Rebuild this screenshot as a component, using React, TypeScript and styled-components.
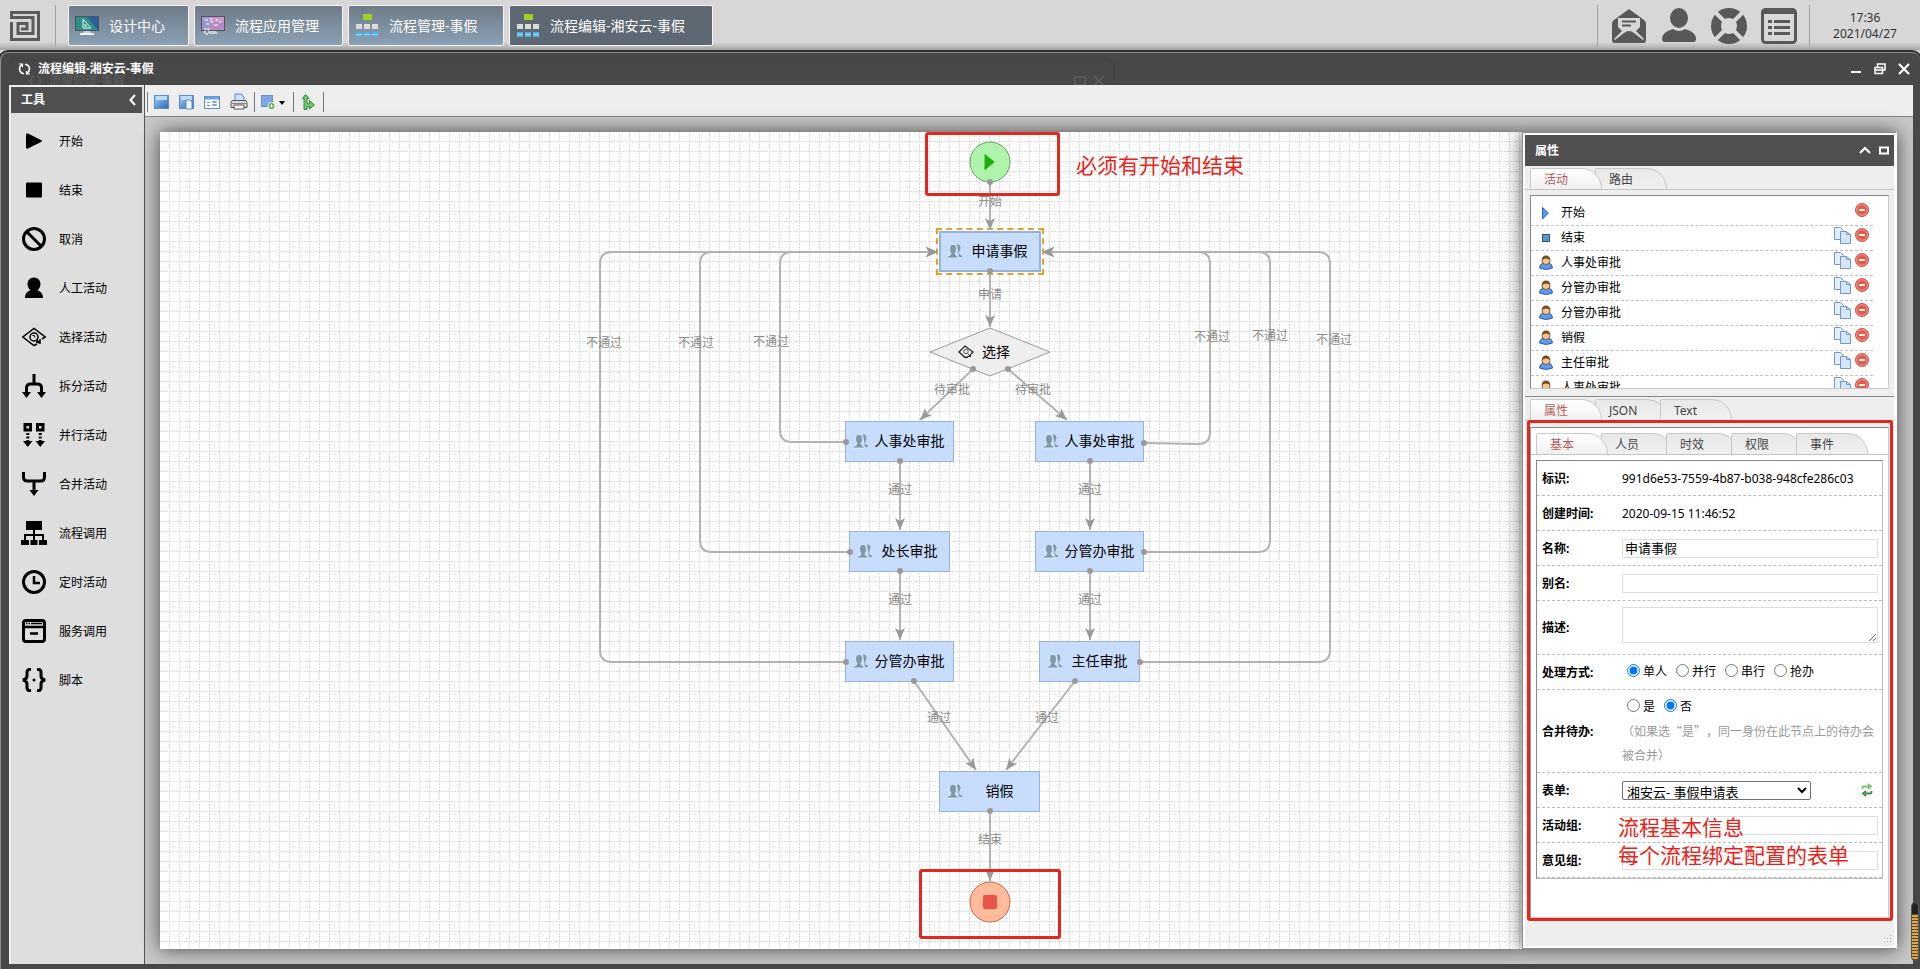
import React from 'react';
import styled, { createGlobalStyle, css } from 'styled-components';

const GlobalStyle = createGlobalStyle`
  *, *::before, *::after { box-sizing: border-box; }
  body {
    margin: 0;
    font: 12px/16px "Noto Sans", "Noto Sans CJK SC", sans-serif;
    color: #000;
    background: #d7d7d7;
  }
  button, input, select, textarea { font: inherit; color: inherit; }
  button { padding: 0; border: 0; background: none; cursor: pointer; }
  ul { margin: 0; padding: 0; list-style: none; }
  svg { display: block; }
`;

/* ---------- desktop ---------- */

const Desktop = styled.div`
  min-height: 100vh;
  display: flex;
  flex-direction: column;
  overflow: hidden;
`;

const Taskbar = styled.header`
  flex: none;
  height: 50px;
  display: flex;
  align-items: stretch;
  padding: 5px 0 4px 10px;
  background: linear-gradient(#d7d7d7 0 42px, #a4a4a4 50px);
`;

const LogoButton = styled.button`
  width: 30px;
`;

const BarDivider = styled.span<{ $before: number; $after: number }>`
  width: 1px;
  margin: 0 ${p => p.$after}px 0 ${p => p.$before}px;
  background: #a2a2a2;
`;

const Tasks = styled.nav`
  flex: 1;
  display: flex;
  gap: 5px;
`;

const TaskButton = styled.button<{ $active?: boolean; $min: number }>`
  display: flex;
  align-items: center;
  gap: 10px;
  min-width: ${p => p.$min}px;
  padding: 0 23px 0 6px;
  border: 1px solid #f4f4f4;
  border-radius: 2px;
  color: #fff;
  font-size: 14px;
  line-height: 20px;
  white-space: nowrap;
  background: ${p => (p.$active ? '#5d6872' : 'linear-gradient(#6f7b88, #8ba1b4)')};
`;

const Tray = styled.div`
  display: flex;
  align-items: center;
  gap: 14px;
  color: #585858;
`;

const Clock = styled.time`
  width: 110px;
  align-self: center;
  color: #333;
  text-align: center;
`;

/* ---------- window ---------- */

const Window = styled.main`
  position: relative;
  flex: 1;
  display: flex;
  flex-direction: column;
  padding: 0 7px 5px 8px;
  border: solid #8c8d8e;
  border-width: 1px 0 0 1px;
  border-radius: 8px 8px 0 0;
  background: #484848;
  box-shadow: 0 0 0 2px #2f3134;
  margin-top: 2px;
`;

const TitleBar = styled.div`
  position: relative;
  height: 32px;
  display: flex;
  align-items: center;
  gap: 7px;
  padding: 0 3px 0 9px;
  overflow: hidden;
  color: #fff;
  font-weight: 700;
`;

const Title = styled.h1`
  position: relative;
  margin: 0;
  flex: 1;
  font-size: 12px;
  line-height: 16px;
`;

const BackWindow = styled.div`
  position: absolute;
  top: 8px;
  left: 0;
  width: 58%;
  height: 40px;
  display: flex;
  align-items: center;
  gap: 7px;
  padding: 0 8px 0 20px;
  border-radius: 6px;
  color: #585959;
  box-shadow: 0 0 4px #3a3a3a;
`;

const BackTitle = styled.span`
  flex: 1;
`;

const WindowActions = styled.div`
  display: flex;
  gap: 12px;
`;

const WindowBody = styled.div`
  flex: 1;
  display: flex;
  min-width: 0;
`;

const SideBar = styled.aside`
  flex: none;
  width: 136px;
  padding: 2px;
  border-right: 1px solid #555;
  background: #dedede;
  box-shadow: inset 0 2px #eee, inset 2px 0 #eee;
`;

const SideHeader = styled.div`
  height: 26px;
  display: flex;
  align-items: center;
  justify-content: space-between;
  padding: 0 6px 0 10px;
  background: #505050;
  color: #fff;
  font-weight: 700;
`;

const ToolList = styled.ul`
  padding-top: 3px;
`;

const ToolButton = styled.button`
  width: 100%;
  height: 49px;
  display: flex;
  align-items: center;
  gap: 13px;
  padding-left: 11px;
`;

const ToolName = styled.span`
  padding-top: 2px;
`;

const Workspace = styled.div`
  flex: 1;
  min-width: 0;
  display: flex;
  flex-direction: column;
`;

const Toolbar = styled.div`
  flex: none;
  height: 32px;
  display: flex;
  align-items: center;
  padding: 2px 2px 0;
  border-bottom: 1px solid #858585;
  background: #eee;
`;

const ToolGroup = styled.div`
  display: flex;
  align-items: center;
  gap: 10px;
  height: 20px;
  padding: 0 6px;
  border-left: 1px solid #777;
  &:last-child { padding: 0 8px; border-right: 1px solid #777; }
`;

const Stage = styled.div`
  flex: 1;
  display: flex;
  padding: 15px 16px 15px 15px;
  background: #c8c8c8;
`;

/* ---------- diagram ---------- */

const PaperFrame = styled.div`
  flex: 1;
  display: flex;
  min-width: 0;
  box-shadow: 0 0 18px rgba(0, 0, 0, 0.65);
`;

const Paper = styled.section`
  position: relative;
  flex: 1;
  min-height: 812px;
  min-width: 0;
  overflow: hidden;
  background: #fff;
`;

const Layer = styled.svg`
  position: absolute;
  inset: 0;
  width: 100%;
  height: 100%;
`;

const NodeBox = styled.div<{ $x: number; $y: number; $w: number; $selected?: boolean }>`
  position: absolute;
  left: ${p => p.$x}px;
  top: ${p => p.$y}px;
  width: ${p => p.$w}px;
  height: 41px;
  display: flex;
  align-items: center;
  padding: 0 3px 1px 7px;
  border: ${p => (p.$selected ? 2 : 1)}px solid #94b2dc;
  background: #c8ddfb;
  font-size: 14px;
  line-height: 20px;
  ${p => p.$selected && css`
    padding-left: 6px;
    outline: 2px dashed #e2a220;
    outline-offset: 1px;
  `}
`;

const NodeName = styled.span`
  flex: 1;
  text-align: center;
  white-space: nowrap;
`;

const ChoiceName = styled.span<{ $x: number; $y: number }>`
  position: absolute;
  left: ${p => p.$x}px;
  top: ${p => p.$y}px;
  display: flex;
  align-items: center;
  gap: 8px;
  font-size: 14px;
  line-height: 20px;
`;

const EdgeLabel = styled.span<{ $x: number; $y: number }>`
  position: absolute;
  left: ${p => p.$x - 30}px;
  top: ${p => p.$y - 8}px;
  width: 60px;
  text-align: center;
  color: #8a8a8a;
`;

const RedFrame = styled.div<{ $x: number; $y: number; $w: number; $h: number }>`
  position: absolute;
  left: ${p => p.$x}px;
  top: ${p => p.$y}px;
  width: ${p => p.$w}px;
  height: ${p => p.$h}px;
  border: 3px solid #e3261e;
  border-radius: 3px;
  z-index: 2;
  pointer-events: none;
`;

const RedNote = styled.p<{ $x: number; $y: number }>`
  position: absolute;
  left: ${p => p.$x}px;
  top: ${p => p.$y}px;
  margin: 0;
  color: #e8231a;
  font-size: 21px;
  line-height: 28px;
  white-space: nowrap;
  pointer-events: none;
`;

/* ---------- property panel ---------- */

const Panel = styled.aside`
  position: relative;
  flex: none;
  width: 375px;
  display: flex;
  flex-direction: column;
  padding: 2px;
  border: 1px solid #8c8c8c;
  border-right-color: #fff;
  background: #eee;
  box-shadow: inset 0 0 0 2px #fff, 0 0 18px rgba(0, 0, 0, 0.65);
`;

const PanelHeader = styled.div`
  height: 31px;
  display: flex;
  align-items: center;
  gap: 8px;
  padding: 0 5px 0 10px;
  background: #505050;
  color: #fff;
`;

const PanelTitle = styled.h2`
  flex: 1;
  margin: 0;
  font-size: 12px;
  line-height: 16px;
`;

const TabStrip = styled.div<{ $inner?: boolean }>`
  flex: none;
  height: ${p => (p.$inner ? 27 : 24)}px;
  display: flex;
  align-items: flex-end;
  padding-left: 5px;
  border-bottom: 1px solid #c4c4c4;
`;

const Tab = styled.button<{ $active?: boolean }>`
  position: relative;
  z-index: ${p => (p.$active ? 1 : 0)};
  width: 72px;
  height: 21px;
  margin-right: -7px;
  padding: 2px 0 0 13px;
  border: solid #c8c8c8;
  border-width: 1px 1px 0 1px;
  border-radius: 2px 20px 0 0 / 2px 21px 0 0;
  background: ${p => (p.$active ? 'linear-gradient(#fff, #f0f0f0)' : 'linear-gradient(#e8e8e8, #f0f0f0)')};
  color: ${p => (p.$active ? '#b95a5a' : '#444')};
  text-align: left;
`;

const ActivityList = styled.ul`
  flex: none;
  height: 194px;
  margin: 5px 5px 0;
  padding: 5px 15px 0 0;
  border: 1px solid #c8c8c8;
  border-top-color: #888;
  border-left-color: #888;
  background: #fff;
  overflow: hidden;
`;

const ActivityRow = styled.li`
  height: 25px;
  display: flex;
  align-items: center;
  padding: 0 4px 0 7px;
  border-bottom: 1px dashed #c0c0c0;
`;

const ActivityName = styled.span`
  flex: 1;
  padding-left: 7px;
`;

const RowActions = styled.span`
  display: flex;
  align-items: center;
  gap: 4px;
  padding-bottom: 6px;
`;

const Lower = styled.div`
  position: relative;
  flex: 1;
  display: flex;
  flex-direction: column;
  margin-top: 7px;
  border-top: 1px solid #888;
`;

const LowerPane = styled.div`
  flex: 1;
  margin: 6px 5px 28px;
  border: 1px solid #c8c8c8;
  border-top-color: #888;
  border-left-color: #999;
  background: #fff;
`;

const Form = styled.form`
  margin: 5px;
  border: 1px solid #bbb;
  border-top-color: #888;
  border-left-color: #888;
`;

const Field = styled.div<{ $h?: number }>`
  height: ${p => p.$h ?? 35}px;
  display: flex;
  align-items: center;
  padding: 0 4px 0 5px;
  border-bottom: 1px dashed #bbb;
`;

const FieldName = styled.label`
  width: 80px;
  padding-top: 1px;
  font-weight: 700;
`;

const FieldValue = styled.span`
  padding-top: 1px;
`;

const FieldBody = styled.div`
  flex: 1;
  display: flex;
  align-items: center;
`;

const TextInput = styled.input`
  flex: 1;
  min-width: 0;
  height: 19px;
  padding: 0 2px 1px;
  border: 1px solid #ddd;
  background: #fff;
  font-size: 13px;
  line-height: 16px;
`;

const TextBox = styled.textarea`
  display: block;
  width: 100%;
  height: 36px;
  border: 1px solid #ddd;
  margin-bottom: 6px;
`;

const RadioLine = styled.div`
  display: flex;
  gap: 9px;
  padding-left: 5px;
`;

const RadioOption = styled.label`
  display: flex;
  align-items: center;
  gap: 3px;
  height: 24px;
`;

const Radio = styled.input`
  width: 13px;
  height: 13px;
  margin: 0 0 4px;
`;

const MergeBody = styled.div`
  flex: 1;
`;

const Hint = styled.p`
  margin: 0;
  color: #999;
  font-family: "Noto Sans CJK SC", sans-serif;
  line-height: 24px;
  text-spacing-trim: space-all;
`;

const FormSelect = styled.select`
  width: 189px;
  height: 19px;
  padding: 0;
  border: 1px solid #707070;
  border-radius: 2px;
  background: #fff;
  font-size: 13px;
  line-height: 16px;
`;

const RefreshButton = styled.button`
  margin: 0 5px 0 auto;
`;

const Grip = styled.svg`
  position: absolute;
  right: 4px;
  bottom: 5px;
`;

const ScrollMark = styled.div`
  position: absolute;
  right: 1px;
  bottom: 8px;
  width: 8px;
  height: 59px;
  border: 1px solid #555;
  border-radius: 4px;
  background: linear-gradient(#222 0 11px, transparent 11px),
    repeating-linear-gradient(#d8a84a 0 2px, #5a4520 2px 3px);
`;

/* ---------- icons ---------- */

const Logo = () => (
  <svg width="30" height="30" viewBox="0 0 30 30" fill="none" stroke="#5a5a5a" strokeWidth="3">
    <path d="M0 1.500H28.500V28.500H1.500V11" />
    <path d="M1.500 0v6.500H23V22.500H8V12.500H17V18H11" />
  </svg>
);

const Monitor = ({ pink }: { pink?: boolean }) => (
  <svg width="24" height="24" viewBox="0 0 24 24">
    <rect x="0.500" y="2.500" width="23" height="14" fill={pink ? '#b58bc4' : '#2d8f86'} stroke="#4b5560" />
    {pink ? (
      <>
        <path d="M1 3h22v5H1z" fill="#c898c8" />
        <path d="M1 3h8v13H1z" fill="#8e9ad0" opacity="0.600" />
        <path d="M4 6h3M9 5h2M9 8h3M15 6h2M18 8h2M5 10h3M13 11h4" stroke="#fff" strokeWidth="1" />
        <path d="M10 17h5l2 3H9z" fill="#c8d0d6" />
        <circle cx="6" cy="17.500" r="2.500" fill="none" stroke="#e6e6e6" strokeWidth="2" strokeDasharray="2 1" />
      </>
    ) : (
      <>
        <path d="M12 3h11v13z" fill="#2a5d9a" />
        <path d="M8 5v9h8zM10 10v2h2z" fill="none" stroke="#e8fff0" />
        <path d="M9 17h6l1 2H8z" fill="#c8d0d6" />
        <path d="M5 20h14" stroke="#f0f4f7" strokeWidth="2" />
      </>
    )}
  </svg>
);

const OrgColor = () => (
  <svg width="24" height="24" viewBox="0 0 24 24">
    <rect x="8" y="0" width="9" height="6" fill="#9fd320" />
    <path d="M1 10h6v5H1zM9 10h6v5H9zM17 10h6v5h-6z" fill="#dcdcdc" />
    <path d="M1 18h6v5H1zM9 18h6v5H9zM17 18h6v5h-6z" fill="#4fb0ea" />
    <path d="M1 20.500h6M9 20.500h6M17 20.500h6" stroke="#a7dcf8" />
  </svg>
);

const Mail = () => (
  <svg width="36" height="36" viewBox="0 0 36 36" fill="currentColor">
    <path d="M18 1L33 12q2 1 2 4v16q0 3-3 3H4q-3 0-3-3V16q0-3 2-4z" />
    <path d="M7 10h22v9l-4 4 8 8-1 1-9-7q-5-4-10 0l-9 7-1-1 8-8-4-4z" fill="#d7d7d7" />
    <path d="M11 13.500h14M11 17.500h9" stroke="currentColor" strokeWidth="2" />
  </svg>
);

const BigUser = () => (
  <svg width="36" height="36" viewBox="0 0 36 36" fill="currentColor">
    <ellipse cx="18" cy="10" rx="9" ry="10" />
    <path d="M1 31q0-7 11-10 6 4 12 0 11 3 11 10 0 3-3 3H4q-3 0-3-3z" />
  </svg>
);

const LifeBuoy = () => (
  <svg width="36" height="36" viewBox="0 0 36 36" fill="none">
    <circle cx="18" cy="18" r="12" stroke="currentColor" strokeWidth="12" />
    <path d="M4 4l28 28M32 4L4 32" stroke="#d7d7d7" strokeWidth="4" />
    <circle cx="18" cy="18" r="8" fill="#d7d7d7" />
  </svg>
);

const ListBox = () => (
  <svg width="36" height="36" viewBox="0 0 36 36" fill="none" stroke="currentColor">
    <rect x="1.500" y="1.500" width="33" height="33" rx="3" strokeWidth="3" />
    <path d="M2 3.500h32" strokeWidth="5" />
    <path d="M7 13.500h4M13 13.500h16M7 19.500h4M13 19.500h16M7 25.500h4M13 25.500h16" strokeWidth="3" />
  </svg>
);

const Cycle = () => (
  <svg width="13" height="12" viewBox="0 0 13 12" fill="none" stroke="currentColor" strokeWidth="1.500">
    <path d="M4.500 1.500Q1.500 3 1.500 6t3 4.500H6M8.500 10.500q3-1.500 3-4.500t-3-4.500H7" />
    <path d="M1 1h3.500v3M12 11H8.500V8" strokeWidth="1.200" />
  </svg>
);

const Minimize = () => (
  <svg width="12" height="12" viewBox="0 0 12 12"><path d="M1 9h10" stroke="#fff" strokeWidth="2" /></svg>
);
const Restore = () => (
  <svg width="12" height="12" viewBox="0 0 12 12" fill="none" stroke="#fff" strokeWidth="1.500">
    <path d="M3.500 4V1h7.500v6H9M1 4.500h7.500v6H1zM1 7h7" />
  </svg>
);
const Maximize = () => (
  <svg width="12" height="12" viewBox="0 0 12 12"><path d="M1 2h10v8H1z" fill="none" stroke="currentColor" strokeWidth="2" /></svg>
);
const Close = () => (
  <svg width="12" height="12" viewBox="0 0 12 12"><path d="M1 1l10 10M11 1L1 11" stroke="currentColor" strokeWidth="2.200" /></svg>
);

const tools: { name: string; icon: React.ReactNode }[] = [
  { name: '开始', icon: <path d="M4 5.500Q4 4 6 4.500l13 6.500q2 1 0 2L6 19.500q-2 .5-2-1z" fill="#000" stroke="none" /> },
  { name: '结束', icon: <rect x="4" y="4.500" width="16" height="15" rx="1" fill="#000" stroke="none" /> },
  { name: '取消', icon: <><circle cx="12" cy="12" r="10.500" /><path d="M5 5l14 14" /></> },
  {
    name: '人工活动',
    icon: <path d="M12 1.500c-4 0-6.500 3-6.500 6.500 0 3 1.500 5 3 6.500-3 .5-5.500 3-5.500 7.500h18c0-4.500-2.500-7-5.500-7.500 1.500-1.500 3-3.500 3-6.500 0-3.500-2.500-6.500-6.500-6.500z" fill="#000" stroke="none" />,
  },
  {
    name: '选择活动',
    icon: (
      <g strokeWidth="1.500">
        <path d="M15 19l-3 1.500L.8 12 12 3.500 23.200 12 20 14" />
        <circle cx="12" cy="12" r="4" />
        <path d="M14.500 14.500l2.500 3M14 17l4 1v-4" />
        <path d="M10.500 10.500q2.500-1 2.500 2" strokeWidth="1" />
      </g>
    ),
  },
  {
    name: '拆分活动',
    icon: <><path d="M12 0v10M4.500 19v-5q0-4 4-4h7q4 0 4 4v5" /><path d="M0 18h9l-4.500 6zM15 18h9l-4.500 6z" fill="#000" stroke="none" /></>,
  },
  {
    name: '并行活动',
    icon: (
      <>
        <path d="M3 1.500h5.500V7H3zM15.500 1.500H21V7h-5.500z" />
        <path d="M5.800 10v9M18.200 10v9" strokeDasharray="2 1.500" />
        <path d="M1 18h9.500l-4.700 6zM13.500 18H23l-4.700 6z" fill="#000" stroke="none" />
      </>
    ),
  },
  {
    name: '合并活动',
    icon: <><path d="M1.500 0v5q0 4 4 4h13q4 0 4-4V0M12 9v10" /><path d="M7.500 18h9L12 24z" fill="#000" stroke="none" /></>,
  },
  {
    name: '流程调用',
    icon: (
      <>
        <path d="M4 0h16v9H4zM-1 19h8v5h-8zM8.500 19h7v5h-7zM17 19h8v5h-8z" fill="#000" stroke="none" />
        <path d="M12 9v10M3 19v-5h18v5" strokeWidth="2" />
      </>
    ),
  },
  { name: '定时活动', icon: <><circle cx="12" cy="12" r="10.500" /><path d="M12 6v7h6" strokeWidth="2.500" /></> },
  {
    name: '服务调用',
    icon: <><rect x="1.500" y="1.500" width="21" height="21" rx="2.500" /><path d="M3 8h18M8 14.500h8" strokeWidth="2.500" /><path d="M4 4.500h16" strokeWidth="1.500" strokeDasharray="1.500 1 1.500 1 20" /></>,
  },
  {
    name: '脚本',
    icon: <><path d="M9 1.500Q5 1 5 4v4q0 3-4 4 4 1 4 4v4q0 3 4 2.500M15 1.500q4-.5 4 2.500v4q0 3 4 4-4 1-4 4v4q0 3-4 2.500" /><circle cx="12" cy="12" r="1.500" fill="#000" stroke="none" /></>,
  },
];

const ToolIcon = ({ children }: { children: React.ReactNode }) => (
  <svg width="24" height="24" viewBox="0 0 24 24" fill="none" stroke="#000" strokeWidth="3" overflow="visible">{children}</svg>
);

const SaveIcon = ({ page }: { page?: boolean }) => (
  <svg width="15" height="16" viewBox="0 0 15 16">
    <defs>
      <linearGradient id="disk" x1="0" y1="0" x2="1" y2="1">
        <stop offset="0" stopColor="#a8d0f4" />
        <stop offset="1" stopColor="#2468b0" />
      </linearGradient>
    </defs>
    <rect x="0.500" y="1.500" width="14" height="13" fill="url(#disk)" stroke="#5b8fc8" />
    <rect x="2" y="2" width="11" height="4" fill="#bfdcf6" />
    {page && <path d="M7 6h4l2 2v7H7z" fill="#f4f9ff" stroke="#5b8fc8" />}
  </svg>
);

const FormIcon = () => (
  <svg width="16" height="16" viewBox="0 0 16 16" fill="none">
    <rect x="0.500" y="2.500" width="15" height="12" fill="#fff" stroke="#5b8fd0" />
    <path d="M1 4h14" stroke="#6da2e0" strokeWidth="3" />
    <path d="M3 8.500h3M3 11.500h3" stroke="#5b8fd0" />
    <path d="M8.500 7.500h4v1h-4zM8.500 10.500h4v1h-4z" stroke="#7aa7dc" />
  </svg>
);

const PrintIcon = () => (
  <svg width="18" height="18" viewBox="0 0 18 18">
    <path d="M5 8V1h6l3 3v4z" fill="#cfe2fb" stroke="#5a80c0" />
    <path d="M2 7.500h14l1 2v5H1v-5z" fill="#dcdcdc" stroke="#555" />
    <path d="M4 12h10v4H4z" fill="#fff" stroke="#555" />
    <path d="M2 10.500h14" stroke="#888" />
  </svg>
);

const AddShape = () => (
  <svg width="26" height="16" viewBox="0 0 26 16">
    <rect x="0.500" y="1.500" width="11" height="11" fill="#7ea6e4" stroke="#6a90d0" />
    <circle cx="10.500" cy="12" r="3.500" fill="#5aa848" stroke="#e8f6e4" />
    <path d="M8.500 12h4M10.500 10v4" stroke="#fff" />
    <path d="M18 7h6l-3 4z" fill="#000" />
  </svg>
);

const BranchIcon = () => (
  <svg width="13" height="16" viewBox="0 0 13 16">
    <path d="M3.500 0.500L7 4.500H5V9q0 .8 1 .8h1.500V6.500l5 4.500-5 4v-2.500H6q-1 0-1 .5v2.500H2v-11H.5z" fill="#74c872" stroke="#318a36" />
  </svg>
);

const Persons = () => (
  <svg width="16" height="15" viewBox="0 0 16 15" fill="#7f97a6">
    <path d="M10 0.500q3.500-.5 3.500 3.500l-1.500 4.500q0 2.500 3 3v1.500h-3z" />
    <path d="M6 0.500q3.500 0 3.500 4.500 0 3-1.500 4.500 0 1.800 3 3v1.500H0v-1.500q4-.7 4-3-1.500-2-1.500-4.500 0-4.500 3.500-4.500z" stroke="#e4effc" strokeWidth="0.800" />
  </svg>
);

const ChoiceIcon = () => (
  <svg width="16" height="14" viewBox="0 0 16 14" fill="none" stroke="#222">
    <path d="M10 12l-3 .5L1 7l6-6 8 6-2 2" strokeWidth="1.300" />
    <circle cx="8" cy="6.500" r="2.200" stroke="#555" />
    <path d="M10 9l2 2M9.500 11.500h3V9" />
  </svg>
);

const RowIcon = ({ kind }: { kind: 'start' | 'end' | 'user' }) => (
  <svg width="16" height="16" viewBox="0 0 16 16">
    {kind === 'start' && <path d="M4.500 2.500l6 5.500-6 6z" fill="#5f98e8" stroke="#2f62bd" />}
    {kind === 'end' && <rect x="4.500" y="4.500" width="7" height="7" fill="#5d96cb" stroke="#2d567f" />}
    {kind === 'user' && (
      <>
        <path d="M1.500 13q0-4 4-5h5q4 1 4 5-6 3-13 0z" fill="#5b9cf0" stroke="#2a5cb0" />
        <circle cx="8" cy="5.500" r="4" fill="#f6c795" stroke="#8a5528" />
        <path d="M4 5q0-4.500 4-4.500t4 4.500Q10 3.500 8 3.500T4 5z" fill="#7a4a1c" />
      </>
    )}
  </svg>
);

const CopyIcon = () => (
  <svg width="17" height="17" viewBox="0 0 17 17" fill="#e2eefc" stroke="#7495cc">
    <path d="M.5.5h6l3 3v9h-9z" />
    <path d="M6.500 4.500h6l4 3v9h-10z" fill="#d4e6fb" />
    <path d="M12.500 4.500v3h4" fill="none" />
  </svg>
);

const DeleteIcon = () => (
  <svg width="14" height="14" viewBox="0 0 14 14">
    <circle cx="7" cy="7" r="6.500" fill="#e05a50" stroke="#cf544c" />
    <circle cx="7" cy="7" r="5.300" fill="none" stroke="#f09a90" />
    <path d="M4 7h6" stroke="#fff4d8" strokeWidth="2" />
  </svg>
);

const RefreshIcon = () => (
  <svg width="12" height="14" viewBox="0 0 12 14" fill="none">
    <path d="M1.500 6V4.500Q1.500 3.500 3 3.500h5M7 1l3 2.500L7 6" stroke="#7cc07a" strokeWidth="1.800" />
    <path d="M10.500 8v1.500q0 1-1.500 1H4M5 8l-3 2.500L5 13" stroke="#3f8a44" strokeWidth="1.800" />
  </svg>
);

/* ---------- data ---------- */

const tasks = [
  { name: '设计中心', icon: <Monitor />, min: 121 },
  { name: '流程应用管理', icon: <Monitor pink />, min: 149 },
  { name: '流程管理-事假', icon: <OrgColor />, min: 156 },
  { name: '流程编辑-湘安云-事假', icon: <OrgColor />, min: 204, active: true },
];

const nodes = [
  { name: '申请事假', x: 779, y: 99, w: 102, selected: true },
  { name: '人事处审批', x: 685, y: 289, w: 109 },
  { name: '人事处审批', x: 875, y: 289, w: 109 },
  { name: '处长审批', x: 689, y: 399, w: 101 },
  { name: '分管办审批', x: 875, y: 399, w: 109 },
  { name: '分管办审批', x: 685, y: 509, w: 109 },
  { name: '主任审批', x: 879, y: 509, w: 101 },
  { name: '销假', x: 779, y: 639, w: 101 },
];

const edges = [
  'M830 50V98', 'M830 139V195', 'M813 237L760 288', 'M848 237L907 288',
  'M740 329V398', 'M930 329V398', 'M740 439V508', 'M930 439V508',
  'M754 549L816 638', 'M915 549L846 638', 'M830 679V749',
  'M686 310H632Q620 310 620 298V132Q620 120 632 120H778',
  'M690 420H552Q540 420 540 408V132Q540 120 552 120H778',
  'M686 530H452Q440 530 440 518V132Q440 120 452 120H778',
  'M984 311L1038 312Q1050 312 1050 300V132Q1050 120 1038 120H882',
  'M984 420H1098Q1110 420 1110 408V132Q1110 120 1098 120H882',
  'M980 530H1158Q1170 530 1170 518V132Q1170 120 1158 120H882',
];

const edgeLabels: [string, number, number][] = [
  ['开始', 830, 70], ['申请', 830, 163], ['待审批', 792, 258], ['待审批', 873, 258],
  ['通过', 740, 358], ['通过', 930, 358], ['通过', 740, 468], ['通过', 930, 468],
  ['通过', 779, 586], ['通过', 887, 586], ['结束', 830, 708],
  ['不通过', 444, 211], ['不通过', 536, 211], ['不通过', 611, 210],
  ['不通过', 1052, 205], ['不通过', 1110, 204], ['不通过', 1174, 208],
];

const activities: { name: string; kind: 'start' | 'end' | 'user' }[] = [
  { name: '开始', kind: 'start' },
  { name: '结束', kind: 'end' },
  { name: '人事处审批', kind: 'user' },
  { name: '分管办审批', kind: 'user' },
  { name: '分管办审批', kind: 'user' },
  { name: '销假', kind: 'user' },
  { name: '主任审批', kind: 'user' },
  { name: '人事处审批', kind: 'user' },
];

const Tabs = ({ names, inner }: { names: string[]; inner?: boolean }) => (
  <TabStrip $inner={inner} role="tablist">
    {names.map((n, i) => (
      <Tab key={n} role="tab" type="button" aria-selected={i === 0} $active={i === 0}>{n}</Tab>
    ))}
  </TabStrip>
);

const Options = ({ group, names, chosen }: { group: string; names: string[]; chosen: string }) => (
  <RadioLine role="radiogroup" aria-labelledby={`${group}-name`}>
    {names.map(n => (
      <RadioOption key={n}>
        <Radio type="radio" name={group} defaultChecked={n === chosen} />
        {n}
      </RadioOption>
    ))}
  </RadioLine>
);

const Diagram = () => (
  <Paper>
    <Layer>
      <defs>
        <pattern id="grid" width="30" height="30" patternUnits="userSpaceOnUse">
          <path
            d="M9.500 0v30M19.500 0v30M29.500 0v30M0 9.500h30M0 19.500h30M0 29.500h30"
            stroke="#dcdcdc" strokeDasharray="2 1" fill="none"
          />
        </pattern>
        <marker id="arrow" markerUnits="userSpaceOnUse" markerWidth="14" markerHeight="12" refX="12" refY="5" orient="auto">
          <path d="M0 0l12 5-12 5 3-5z" fill="#999" />
        </marker>
        <marker id="dot" markerUnits="userSpaceOnUse" markerWidth="8" markerHeight="8" refX="4" refY="4">
          <circle cx="4" cy="4" r="3" fill="#999" />
        </marker>
      </defs>
      <rect width="100%" height="100%" fill="url(#grid)" />
      <circle cx="830" cy="30" r="20" fill="#aef5ab" stroke="#6aa068" />
      <path d="M825 22.500l9 7.500-9 7.500z" fill="#1fae0b" stroke="#1fae0b" />
      <path d="M830 196l60 24-60 24-60-24z" fill="#eee" stroke="#999" />
      <circle cx="830" cy="770" r="20" fill="#ffbb9b" stroke="#c9694a" />
      <rect x="823" y="763" width="14" height="14" rx="2" fill="#e9544b" />
    </Layer>
    {nodes.map((n, i) => (
      <NodeBox key={i} $x={n.x} $y={n.y} $w={n.w} $selected={n.selected}>
        <Persons />
        <NodeName>{n.name}</NodeName>
      </NodeBox>
    ))}
    <ChoiceName $x={798} $y={210}><ChoiceIcon />选择</ChoiceName>
    <Layer>
      {edges.map(d => (
        <path key={d} d={d} fill="none" stroke="#b2b2b2" strokeWidth="2" markerStart="url(#dot)" markerEnd="url(#arrow)" />
      ))}
    </Layer>
    {edgeLabels.map(([name, x, y], i) => (
      <EdgeLabel key={i} $x={x} $y={y}>{name}</EdgeLabel>
    ))}
    <RedFrame $x={765} $y={0} $w={135} $h={64} />
    <RedFrame $x={759} $y={737} $w={142} $h={70} />
    <RedNote $x={916} $y={19}>必须有开始和结束</RedNote>
  </Paper>
);

const PropertyPanel = () => (
  <Panel>
    <PanelHeader>
      <PanelTitle>属性</PanelTitle>
      <button type="button" aria-label="收起">
        <svg width="12" height="12" viewBox="0 0 12 12" fill="none" stroke="#fff" strokeWidth="2"><path d="M1 8l5-5 5 5" /></svg>
      </button>
      <button type="button" aria-label="最大化">
        <svg width="10" height="12" viewBox="0 0 10 12" fill="none" stroke="#fff" strokeWidth="2"><path d="M1 2.500h8v6H1z" /></svg>
      </button>
    </PanelHeader>
    <Tabs names={['活动', '路由']} />
    <ActivityList>
      {activities.map((a, i) => (
        <ActivityRow key={i}>
          <RowIcon kind={a.kind} />
          <ActivityName>{a.name}</ActivityName>
          <RowActions>
            {a.kind !== 'start' && <button type="button" aria-label="复制"><CopyIcon /></button>}
            <button type="button" aria-label="删除"><DeleteIcon /></button>
          </RowActions>
        </ActivityRow>
      ))}
    </ActivityList>
    <Lower>
      <Tabs names={['属性', 'JSON', 'Text']} />
      <LowerPane>
        <Tabs inner names={['基本', '人员', '时效', '权限', '事件']} />
        <Form>
          <Field><FieldName as="span">标识:</FieldName><FieldValue>991d6e53-7559-4b87-b038-948cfe286c03</FieldValue></Field>
          <Field><FieldName as="span">创建时间:</FieldName><FieldValue>2020-09-15 11:46:52</FieldValue></Field>
          <Field><FieldName htmlFor="name">名称:</FieldName><TextInput id="name" defaultValue="申请事假" /></Field>
          <Field><FieldName htmlFor="alias">别名:</FieldName><TextInput id="alias" /></Field>
          <Field $h={54}><FieldName htmlFor="desc">描述:</FieldName><FieldBody><TextBox id="desc" /></FieldBody></Field>
          <Field>
            <FieldName as="span" id="mode-name">处理方式:</FieldName>
            <Options group="mode" names={['单人', '并行', '串行', '抢办']} chosen="单人" />
          </Field>
          <Field $h={83}>
            <FieldName as="span" id="merge-name">合并待办:</FieldName>
            <MergeBody>
              <Options group="merge" names={['是', '否']} chosen="否" />
              <Hint>（如果选“是”，同一身份在此节点上的待办会被合并）</Hint>
            </MergeBody>
          </Field>
          <Field>
            <FieldName htmlFor="form">表单:</FieldName>
            <FieldBody>
              <FormSelect id="form"><option>湘安云- 事假申请表</option></FormSelect>
              <RefreshButton type="button" aria-label="刷新"><RefreshIcon /></RefreshButton>
            </FieldBody>
          </Field>
          <Field><FieldName htmlFor="group">活动组:</FieldName><TextInput id="group" /></Field>
          <Field><FieldName htmlFor="opinion">意见组:</FieldName><TextInput id="opinion" /></Field>
        </Form>
      </LowerPane>
      <RedFrame $x={2} $y={23} $w={366} $h={501} />
      <RedNote $x={93} $y={416}>流程基本信息</RedNote>
      <RedNote $x={93} $y={444}>每个流程绑定配置的表单</RedNote>
    </Lower>
    <Grip width="8" height="8" viewBox="0 0 8 8" fill="#aaa">
      <path d="M6 0h1v1H6zM6 3h1v1H6zM6 6h1v1H6zM3 3h1v1H3zM3 6h1v1H3zM0 6h1v1H0z" />
    </Grip>
  </Panel>
);

export default function App() {
  return (
    <Desktop>
      <GlobalStyle />
      <Taskbar>
        <LogoButton type="button" aria-label="主菜单"><Logo /></LogoButton>
        <BarDivider $before={15} $after={12} />
        <Tasks>
          {tasks.map(t => (
            <TaskButton key={t.name} type="button" $active={t.active} $min={t.min}>{t.icon}{t.name}</TaskButton>
          ))}
        </Tasks>
        <BarDivider $before={0} $after={13} />
        <Tray>
          <button type="button" aria-label="消息"><Mail /></button>
          <button type="button" aria-label="用户"><BigUser /></button>
          <button type="button" aria-label="帮助"><LifeBuoy /></button>
          <button type="button" aria-label="列表"><ListBox /></button>
        </Tray>
        <BarDivider $before={12} $after={0} />
        <Clock>17:36<br />2021/04/27</Clock>
      </Taskbar>
      <Window>
        <TitleBar>
          <BackWindow aria-hidden="true"><Cycle /><BackTitle>流程管理-事假</BackTitle><Maximize /><Close /></BackWindow>
          <Cycle />
          <Title>流程编辑-湘安云-事假</Title>
          <WindowActions>
            <button type="button" aria-label="最小化"><Minimize /></button>
            <button type="button" aria-label="还原"><Restore /></button>
            <button type="button" aria-label="关闭"><Close /></button>
          </WindowActions>
        </TitleBar>
        <WindowBody>
          <SideBar>
            <SideHeader>
              工具
              <button type="button" aria-label="收起工具">
                <svg width="7" height="12" viewBox="0 0 7 12" fill="none" stroke="#fff" strokeWidth="2"><path d="M6 1L1.500 6 6 11" /></svg>
              </button>
            </SideHeader>
            <ToolList>
              {tools.map(t => (
                <li key={t.name}>
                  <ToolButton type="button"><ToolIcon>{t.icon}</ToolIcon><ToolName>{t.name}</ToolName></ToolButton>
                </li>
              ))}
            </ToolList>
          </SideBar>
          <Workspace>
            <Toolbar>
              <ToolGroup>
                <button type="button" aria-label="保存"><SaveIcon /></button>
                <button type="button" aria-label="另存"><SaveIcon page /></button>
                <button type="button" aria-label="属性"><FormIcon /></button>
                <button type="button" aria-label="打印"><PrintIcon /></button>
              </ToolGroup>
              <ToolGroup><button type="button" aria-label="添加"><AddShape /></button></ToolGroup>
              <ToolGroup><button type="button" aria-label="路由"><BranchIcon /></button></ToolGroup>
            </Toolbar>
            <Stage>
              <PaperFrame><Diagram /></PaperFrame>
              <PropertyPanel />
            </Stage>
          </Workspace>
        </WindowBody>
        <ScrollMark />
      </Window>
    </Desktop>
  );
}
